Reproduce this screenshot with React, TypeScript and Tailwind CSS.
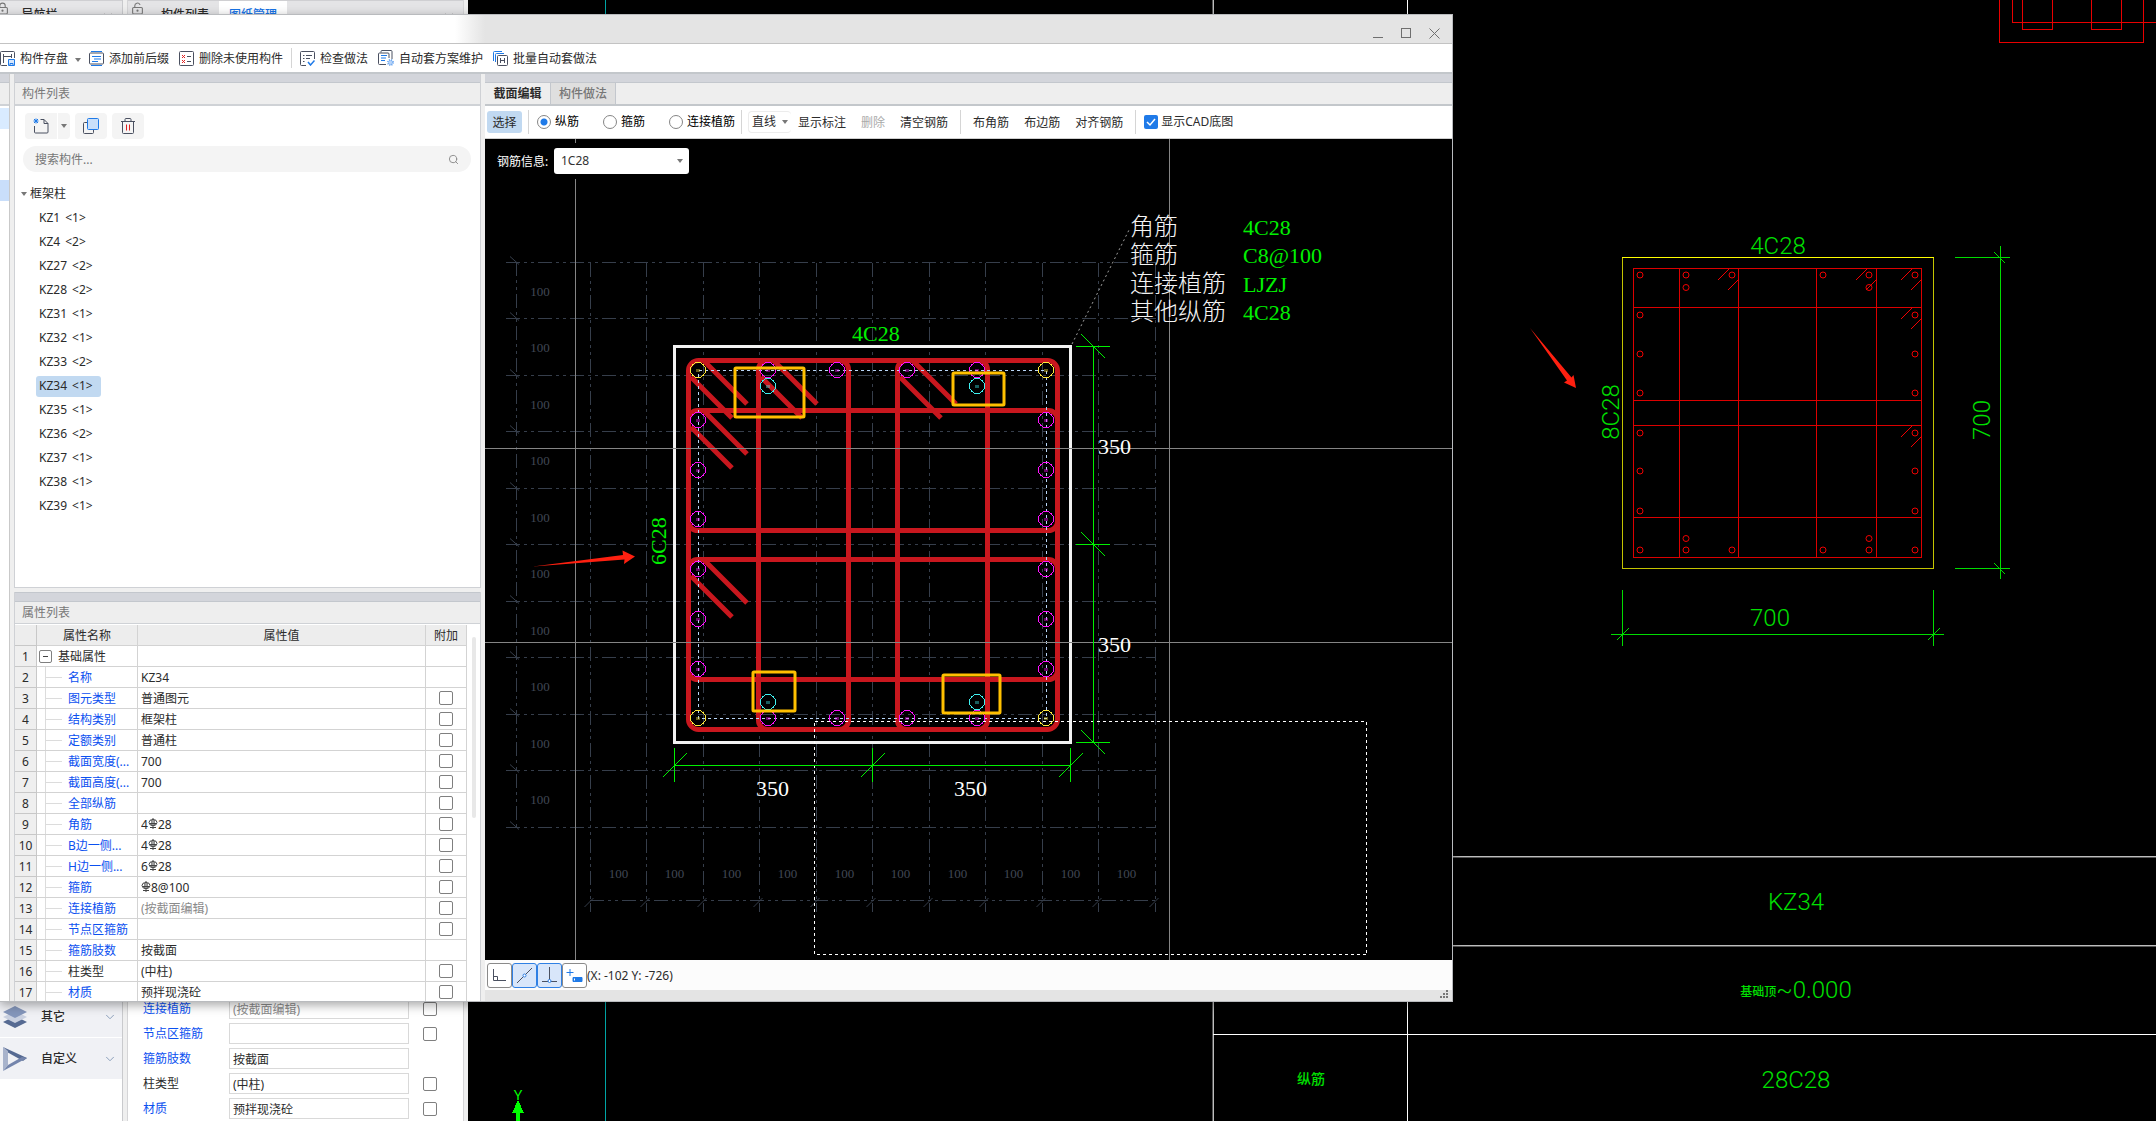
import React from 'react';
import { ChevronDown, LockKeyhole, LockKeyholeOpen, Search, X } from 'lucide-react';

type Prop = {
  name: string;
  value?: string;
  muted?: boolean;
  plain?: boolean;
  check?: boolean;
};

const components = [
  ['KZ1', 1], ['KZ4', 2], ['KZ27', 2], ['KZ28', 2], ['KZ31', 1], ['KZ32', 1], ['KZ33', 2],
  ['KZ34', 1], ['KZ35', 1], ['KZ36', 2], ['KZ37', 1], ['KZ38', 1], ['KZ39', 1],
];

// "|" in a value marks where the rebar grade symbol goes
const props: Prop[] = [
  { name: '名称', value: 'KZ34' },
  { name: '图元类型', value: '普通图元', check: true },
  { name: '结构类别', value: '框架柱', check: true },
  { name: '定额类别', value: '普通柱', check: true },
  { name: '截面宽度(...', value: '700', check: true },
  { name: '截面高度(...', value: '700', check: true },
  { name: '全部纵筋', value: '', check: true },
  { name: '角筋', value: '4|28', check: true },
  { name: 'B边一侧...', value: '4|28', check: true },
  { name: 'H边一侧...', value: '6|28', check: true },
  { name: '箍筋', value: '|8@100', check: true },
  { name: '连接植筋', value: '(按截面编辑)', muted: true, check: true },
  { name: '节点区箍筋', value: '', check: true },
  { name: '箍筋肢数', value: '按截面' },
  { name: '柱类型', value: '(中柱)', plain: true, check: true },
  { name: '材质', value: '预拌现浇砼', check: true },
];

const backProps = props.slice(11);

const range = (n: number) => Array.from({ length: n }, (_, i) => i);

/* ---------- small parts ---------- */

const Caret = () => (
  <svg width="6" height="4" viewBox="0 0 6 4" className="shrink-0">
    <path d="M0 0h6L3 4z" fill="#777" />
  </svg>
);

const Tick = ({ label }: { label: string }) => (
  <input type="checkbox" aria-label={label} className="block size-[14px] shrink-0 appearance-none rounded-[2px] border border-[#7f7f7f] bg-white" />
);

const Rebar = () => (
  <svg width="10" height="12" viewBox="0 0 10 12" className="mb-1 inline-block" fill="none" stroke="#444">
    <path d="M5 0v11M2 9.500h6M2 5.500h6" />
    <path d="M3.500 2v6M6.500 2v6" strokeWidth=".6" />
    <ellipse cx="5" cy="4.500" rx="4" ry="3" />
  </svg>
);

const Value = ({ text }: { text: string }) => {
  const parts = text.split('|');
  return parts.length === 1 ? <>{text}</> : <>{parts[0]}<Rebar />{parts[1]}</>;
};

const Divider = () => <span className="h-6 w-px shrink-0 bg-[#d5d5d5]" />;

/* ---------- toolbar icons ---------- */

const IconSave = () => (
  <svg width="15" height="15" viewBox="0 0 15 15" fill="none" stroke="#4a5060">
    <path d="M7 14.5H1.500a1 1 0 0 1-1-1v-12a1 1 0 0 1 1-1h12a1 1 0 0 1 1 1V7M3.500 3v9M3.500 5.500h8M11.500 3v4" />
    <path d="M8.500 8.500h6v6h-6zM10 12.500h3v2h-3z" stroke="#1f7ae8" fill="#d6e6fb" />
  </svg>
);
const IconAffix = () => (
  <svg width="15" height="15" viewBox="0 0 15 15" fill="none" stroke="#4a5060">
    <path d="M.5 3v9a1 1 0 0 0 1 1h12a1 1 0 0 0 1-1V3a1 1 0 0 0-1-1h-12a1 1 0 0 0-1 1z" />
    <path d="M2 .5h11M2 14.500h11M3 5.500h9M5 8h7M3 10.500h6" stroke="#1f7ae8" />
  </svg>
);
const IconUnused = () => (
  <svg width="15" height="15" viewBox="0 0 15 15" fill="none" stroke="#4a5060">
    <rect x=".5" y=".5" width="14" height="14" rx="1" />
    <path d="M8 5.500h4M8 10.500h4" />
    <path d="M3 4l3 3M6 4l-3 3M3 9l3 3M6 9l-3 3" stroke="#e02020" />
  </svg>
);
const IconCheckRule = () => (
  <svg width="15" height="15" viewBox="0 0 15 15" fill="none" stroke="#4a5060">
    <path d="M6 14.500H1.500a1 1 0 0 1-1-1v-12a1 1 0 0 1 1-1h12a1 1 0 0 1 1 1V8M3 4.500h1.500M6 4.500h6M3 7.500h1.500M6 7.500h4M3 10.500h1.500" />
    <path d="M8 11l2.500 3L14.500 9.500" stroke="#1f7ae8" strokeWidth="1.500" />
  </svg>
);
const IconScheme = () => (
  <svg width="16" height="16" viewBox="0 0 16 16" fill="none" stroke="#4a5060">
    <path d="M3 2.500V1.500a1 1 0 0 1 1-1h9a1 1 0 0 1 1 1V9M8 14.500H1.500a1 1 0 0 1-1-1V4a1 1 0 0 1 1-1H10a1 1 0 0 1 1 1v4" />
    <path d="M3 5.500h6M3 8h5M3 10.500h4" stroke="#1f7ae8" />
    <circle cx="12.500" cy="12.500" r="2.500" stroke="#6aa6f0" strokeWidth="2" strokeDasharray="1 1" fill="#b8d4f8" />
  </svg>
);
const IconBatch = () => (
  <svg width="15" height="15" viewBox="0 0 15 15" fill="none" stroke="#4a5060">
    <path d="M.5 10V1.500a1 1 0 0 1 1-1H9M2.500 11V3.500a1 1 0 0 1 1-1H11" stroke="#1f7ae8" />
    <rect x="4.500" y="4.500" width="10" height="10" rx="1" fill="#fff" />
    <path d="M7.500 7v5M11.500 7v5M7.500 9.500h4" />
  </svg>
);

const ToolButton = ({ icon, children }: { icon: React.ReactNode; children: React.ReactNode }) => (
  <button type="button" className="flex shrink-0 items-center gap-[5px] whitespace-nowrap">
    {icon}
    <span className="pt-[2px]">{children}</span>
  </button>
);

/* ---------- CAD plan behind the dialog ---------- */

const PlanHook = ({ x, y }: { x: number; y: number }) => (
  <path d={`M${x - 10} ${y}l-11 11M${x} ${y + 10}l-11 11`} />
);

const PlanCanvas = () => {
  const sideY = [315, 354, 393, 433, 471, 511];
  const topX = [1640, 1686, 1732, 1823, 1869, 1915];
  return (
    <svg className="h-full w-full" fill="none" shapeRendering="crispEdges">
      {/* origin of the drawing is the window corner */}
      <g transform="translate(-468 0)">
        <path d="M605.500 0V1121" stroke="#00a5a5" />
        <path d="M1213.500 0V1121M1213 856.500H2156M1213 945.500H2156" stroke="#bdbdbd" />
        <path d="M1212.500 0V1121M1213 857.500H2156M1213 946.500H2156" stroke="#555" />
        <path d="M1407.500 0V1121M1213 1034.500H2156" stroke="#fff" />

        {/* cut-off section, top right */}
        <path d="M1999.500 0V42.500H2143.500V0M2012.500 0V22.500H2156M2022.500 0V29.500H2052.500V0M2091.500 0V29.500H2121.500V0" stroke="#e80000" />

        <path d="M1622.500 257.500V568.500H1933.500V257.500" stroke="#c4c400" />
        <path d="M1622 257.500H1934" stroke="#ffff00" />

        <g stroke="#dc0000">
          <rect x="1633.500" y="268.500" width="288" height="289" />
          <path d="M1679.500 268V557M1738.500 268V557M1816.500 268V557M1876.500 268V557" />
          <path d="M1633 307.500H1922M1633 400.500H1922M1633 425.500H1922M1633 517.500H1922" />
        </g>
        <g stroke="#f00000" shapeRendering="auto">
          <PlanHook x={1739} y={269} />
          <PlanHook x={1877} y={269} />
          <PlanHook x={1922} y={269} />
          <PlanHook x={1922} y={308} />
          <PlanHook x={1922} y={426} />
          {topX.map((x) => <circle key={x} cx={x} cy="275" r="3" />)}
          {topX.map((x) => <circle key={x} cx={x} cy="550" r="3" />)}
          {sideY.map((y) => <circle key={y} cx="1640" cy={y} r="3" />)}
          {sideY.map((y) => <circle key={y} cx="1915" cy={y} r="3" />)}
          {[1686, 1869].map((x) => <path key={x} d={`M${x - 3} 287.500a3 3 0 1 0 6 0a3 3 0 1 0-6 0M${x - 3} 538.500a3 3 0 1 0 6 0a3 3 0 1 0-6 0`} />)}
        </g>

        <g stroke="#00dc00">
          <path d="M2000.500 246V579M1955 257.500H2010M1955 568.500H2010M1611 634.500H1944M1622.500 590V646M1933.500 590V646" />
          <path d="M1994 252l11 11M1994 563l11 11M1617 640l12-12M1928 640l12-12" />
        </g>

        <g fill="#00e000" fontFamily="'Roboto', 'Noto Sans CJK SC', sans-serif" fontSize="24" fontWeight="300" textAnchor="middle" shapeRendering="auto">
          <text x="1778" y="254">4C28</text>
          <text x="1770" y="626">700</text>
          <text transform="translate(1619 412) rotate(-90)">8C28</text>
          <text transform="translate(1990 420) rotate(-90)">700</text>
          <text x="1796" y="910">KZ34</text>
          <text x="1796" y="998"><tspan fontSize="12" fontWeight="500" dy="-2">基础顶</tspan><tspan dy="2">~0.000</tspan></text>
          <text x="1796" y="1088">28C28</text>
          <text x="1311" y="1084" fontSize="14" fontWeight="500">纵筋</text>
        </g>

        <path d="M1530 328L1571.500 377.500L1573.500 375L1576 388L1564 382.500L1567 380.500z" fill="#ff2010" shapeRendering="auto" />

        <text x="518" y="1100" textAnchor="middle" fontSize="15" fontFamily="'Noto Sans', sans-serif" fill="#00ff00">Y</text>
        <path d="M518 1100l6 13h-4v8h-4v-8h-4z" fill="#00ff00" />
      </g>
    </svg>
  );
};

/* ---------- section editor canvas ---------- */

const gx = (i: number) => Math.floor(590 + i * 56.5) + 0.5;
const gy = (i: number) => Math.floor(262 + i * 56.5) + 0.5;

const Bars = ({ points, color }: { points: number[][]; color: string }) => (
  <g stroke={color} shapeRendering="crispEdges">
    {points.map(([x, y]) => (
      <g key={`${x}-${y}`}>
        <circle cx={x} cy={y} r="7.500" />
        <path d={`M${x - 2} ${y}h4`} strokeWidth="3" opacity=".4" />
      </g>
    ))}
  </g>
);

const Hooks = ({ x, y }: { x: number; y: number }) => (
  <path d={`M${x + 15} ${y + 1}L${x + 58} ${y + 44}M${x + 2} ${y + 17}L${x + 43} ${y + 58}`} />
);

const SectionCanvas = () => {
  const sideY = [420, 470, 519, 569, 619, 669];
  const topX = [768, 837, 907, 977];
  const magenta = [
    ...sideY.map((y) => [698, y]),
    ...sideY.map((y) => [1046, y]),
    ...topX.map((x) => [x, 370]),
    ...topX.map((x) => [x, 718]),
  ];
  return (
    <svg className="h-full w-full" fill="none">
      <g transform="translate(-485 -139)">
        {/* 100mm snap grid with its two rulers */}
        <g stroke="#363e4b" strokeDasharray="14 4 3 4 3 4" shapeRendering="crispEdges">
          <path d={range(11).map((i) => `M${gx(i)} 263V912M506 ${gy(i)}H1156`).join('')} />
          <path d="M516.500 262V830M590 900.500H1156" />
        </g>
        <path
          stroke="#363e4b"
          d={range(11).map((i) => `M510 ${gy(i) - 6}l9 8M${gx(i) - 6} 907l9-9`).join('')}
        />
        <g fill="#404855" fontFamily="'Liberation Serif', serif" fontSize="13" textAnchor="middle">
          {range(10).map((i) => <text key={i} x="540" y={gy(i) + 33}>100</text>)}
          {range(10).map((i) => <text key={i} x={gx(i) + 28} y="878">100</text>)}
        </g>

        <rect x="674.500" y="346.500" width="396" height="396" stroke="#f2f2f2" strokeWidth="3" />

        {/* stirrups */}
        <g stroke="#c8171e" strokeWidth="5">
          <rect x="688.500" y="360.500" width="369" height="369" rx="10" />
          <rect x="758.500" y="360.500" width="90" height="369" rx="9" />
          <rect x="897.500" y="360.500" width="90" height="369" rx="9" />
          <rect x="688.500" y="410.500" width="369" height="120" rx="9" />
          <rect x="688.500" y="559.500" width="369" height="120" rx="9" />
          <Hooks x={689} y={360} />
          <Hooks x={759} y={360} />
          <Hooks x={898} y={360} />
          <Hooks x={689} y={410} />
          <Hooks x={689} y={559} />
        </g>

        <rect x="698.500" y="370.500" width="348" height="348" stroke="#b9d6f8" strokeDasharray="3 3" shapeRendering="crispEdges" />
        <Bars points={magenta} color="#ff10ff" />
        <Bars points={[[698, 370], [1046, 370], [698, 718], [1046, 718]]} color="#ffe83a" />
        <Bars points={[[768, 386], [977, 386], [768, 702], [977, 702]]} color="#3ff0f0" />

        {/* cross lines */}
        <path d="M575.500 139V960M1169.500 139V960M485 448.500H1452M485 642.500H1452" stroke="#858585" shapeRendering="crispEdges" />
        <rect x="814.500" y="721.500" width="552" height="233" stroke="#fff" strokeDasharray="3 3" shapeRendering="crispEdges" />

        {/* dimensions */}
        <g stroke="#00f000">
          <path d="M1093.500 346V743M1076 346.500h34M1076 544.500h34M1076 742.500h34M674 765.500H1071M674.500 748v34M872.500 748v34M1070.500 748v34" shapeRendering="crispEdges" />
          <path d="M1081 334l24 24M1081 532l24 24M1081 730l24 24M663 777l24-24M861 777l24-24M1059 777l24-24" />
        </g>
        <path d="M1072 344L1130 228" stroke="#a0a0a0" strokeDasharray="2 3" />

        <g stroke="#ffc000" strokeWidth="3">
          <rect x="735" y="368" width="69" height="49" rx="1" />
          <rect x="953" y="373" width="51" height="32" rx="1" />
          <rect x="753" y="672" width="42" height="39" rx="1" />
          <rect x="943" y="675" width="57" height="38" rx="1" />
        </g>

        <g fontFamily="'Liberation Serif', 'Noto Sans CJK SC', serif" fontSize="22" fill="#00f000">
          <text x="852" y="341">4C28</text>
          <text transform="translate(666 565) rotate(-90)">6C28</text>
          <text x="1243" y="235">4C28</text>
          <text x="1243" y="263">C8@100</text>
          <text x="1243" y="292">LJZJ</text>
          <text x="1243" y="320">4C28</text>
          <g fill="#fff">
            <text x="1098" y="454">350</text>
            <text x="1098" y="652">350</text>
            <text x="756" y="796">350</text>
            <text x="954" y="796">350</text>
          </g>
          <g fill="#f4f4f4" fontSize="24" fontWeight="300">
            <text x="1130" y="235">角筋</text>
            <text x="1130" y="263">箍筋</text>
            <text x="1130" y="292">连接植筋</text>
            <text x="1130" y="320">其他纵筋</text>
          </g>
        </g>

        <path d="M533 566.500L623 555L622.500 550.500L635 556.500L624 564L624.500 559.500z" fill="#ff2010" />
      </g>
    </svg>
  );
};

/* ---------- main window ---------- */

const MainWindow = () => (
  <div className="flex h-full bg-[#efefef]">
    <div className="flex w-[123px] shrink-0 flex-col border-r border-[#c9cacd] bg-white">
      <div className="flex h-6 items-center justify-between border-t border-[#cfcfd2] bg-[#e6e6e8] pr-2">
        <LockKeyhole size={13} className="mb-2 -ml-1 text-[#777]" />
        <span className="mt-1 mr-8 font-medium">导航栏</span>
        <X size={12} className="mt-2 text-[#888]" />
      </div>
      <div className="mt-auto mb-[42px] font-medium">
        <button type="button" className="flex h-[41px] w-full items-center bg-[#f0f1f5] pr-[5px] pl-[3px]">
          <svg width="24" height="24" viewBox="0 0 24 24">
            <path d="M0 17l12-6 12 6-12 6z" fill="#566a92" />
            <path d="M0 12l12-6 12 6-12 6z" fill="#c9d0e0" />
            <path d="M0 7l12-6 12 6-12 6z" fill="#8496bb" />
          </svg>
          <span className="ml-[14px]">其它</span>
          <ChevronDown size={14} strokeWidth={1.5} className="ml-auto text-[#7f95b2]" />
        </button>
        <button type="button" className="mt-px flex h-[41px] w-full items-center bg-[#f0f1f5] pr-[5px] pl-[3px]">
          <svg width="24" height="24" viewBox="0 0 24 24">
            <path d="M0 0l24 11-4 3L4 5z" fill="#566a92" />
            <path d="M0 0l5 4v14l-5 6z" fill="#a8b3cc" />
            <path d="M0 24l24-13-5-1L5 18z" fill="#7485ac" />
          </svg>
          <span className="ml-[14px]">自定义</span>
          <ChevronDown size={14} strokeWidth={1.5} className="ml-auto text-[#7f95b2]" />
        </button>
      </div>
    </div>

    <div className="ml-1 flex w-[337px] shrink-0 flex-col border-x border-[#d5d5d7] bg-white">
      <div className="flex h-6 items-center border-t border-[#cfcfd2] bg-[#e4e4e6]">
        <LockKeyholeOpen size={13} className="mb-2 ml-[3px] text-[#777]" />
        <span className="mt-1 ml-[17px] font-medium">构件列表</span>
        <span className="ml-[10px] flex h-full w-[68px] items-center justify-center bg-white pt-1 font-medium text-[#1773e6]">图纸管理</span>
        <X size={12} className="mt-2 mr-2 ml-auto text-[#888]" />
      </div>
      <div className="mt-auto">
        {backProps.map((p) => (
          <div key={p.name} className="flex h-[25px] items-center pl-[15px]">
            <label htmlFor={`back-${p.name}`} className={p.plain ? 'w-[86px]' : 'w-[86px] text-[#0b50f0]'}>{p.name}</label>
            <input
              id={`back-${p.name}`}
              defaultValue={p.value}
              className={`h-[21px] w-[180px] border border-[#d9d9d9] bg-white pl-[3px] ${p.muted ? 'text-[#8a8a8a]' : ''}`}
            />
            {p.check && <span className="ml-[14px]"><Tick label={p.name} /></span>}
          </div>
        ))}
      </div>
    </div>

    <div className="ml-1 min-w-0 flex-1 bg-black">
      <PlanCanvas />
    </div>
  </div>
);

/* ---------- dialog ---------- */

const ComponentList = () => (
  <section className="flex min-h-0 flex-1 flex-col border-x border-b border-[#cfd1d5] bg-white">
    <div className="h-[9px] shrink-0 border-b border-[#c3c7cd] bg-[#d3d5db]" />
    <h2 className="flex h-[23px] shrink-0 items-center border-b-2 border-[#cfd2d6] bg-[#eee] pl-[7px] text-[#777]">构件列表</h2>
    <div className="flex pt-[7px] pl-[10px]">
      <button type="button" aria-label="新建" className="flex h-[26px] w-8 items-center justify-center rounded-l bg-[#f4f4f4]">
        <svg width="16" height="16" viewBox="0 0 16 16" fill="none" stroke="#4a5060">
          <path d="M1.500 8v6a1 1 0 0 0 1 1h11.500a1 1 0 0 0 1-1V5.500L11 1.500H7.500M11 1.500v4h4" />
          <path d="M1 1l4 4M5 1L1 5M3 .5v5M.5 3h5" stroke="#1f7ae8" />
        </svg>
      </button>
      <button type="button" aria-label="新建选项" className="ml-px flex h-[26px] w-3 items-center justify-center rounded-r bg-[#f4f4f4]"><Caret /></button>
      <button type="button" aria-label="复制" className="ml-[5px] flex h-[26px] w-8 items-center justify-center rounded bg-[#f4f4f4]">
        <svg width="16" height="16" viewBox="0 0 16 16" fill="none">
          <rect x=".5" y="4.500" width="10" height="11" rx="1" stroke="#4a5060" />
          <rect x="4.500" y=".5" width="11" height="11" rx="1" stroke="#1f7ae8" fill="#c9dffa" />
        </svg>
      </button>
      <button type="button" aria-label="删除构件" className="ml-[5px] flex h-[26px] w-8 items-center justify-center rounded bg-[#f4f4f4]">
        <svg width="14" height="16" viewBox="0 0 14 16" fill="none" stroke="#4a5060">
          <path d="M0 3.500h14M4 3.500v-2a1 1 0 0 1 1-1h4a1 1 0 0 1 1 1v2M1.500 3.500v11a1 1 0 0 0 1 1h9a1 1 0 0 0 1-1v-11" />
          <path d="M5.500 6.500v6M8.500 6.500v6" stroke="#e02020" />
        </svg>
      </button>
    </div>
    <div className="mt-[7px] mr-[9px] ml-2 flex h-[26px] items-center rounded-full bg-[#f4f4f4] px-3">
      <input aria-label="搜索构件" placeholder="搜索构件..." className="min-w-0 flex-1 bg-transparent pt-px outline-none placeholder:text-[#777]" />
      <Search size={11} className="text-[#888]" />
    </div>
    <div className="mt-[10px]">
      <div className="flex h-6 items-center gap-[3px] pl-[6px]"><Caret />框架柱</div>
      <ul>
        {components.map(([name, count]) => (
          <li key={name} className="flex h-6 items-center pl-[21px]">
            <span className={`flex h-[21px] w-[65px] items-center gap-[5px] rounded-[3px] pl-[3px] ${name === 'KZ34' ? 'bg-[#c1d9f1]' : ''}`}>
              <span>{name}</span>
              <span>&lt;{count}&gt;</span>
            </span>
          </li>
        ))}
      </ul>
    </div>
  </section>
);

const PropertyList = () => (
  <section className="mt-1 flex h-[409px] shrink-0 flex-col overflow-hidden border-x border-[#cfd1d5] bg-white">
    <div className="h-[10px] shrink-0 border-y border-[#c3c7cd] bg-[#d3d5db]" />
    <h2 className="mb-px flex h-[22px] shrink-0 items-center border-b border-[#cfd2d6] bg-[#eee] pl-[7px] text-[#777]">属性列表</h2>
    <div className="flex min-h-0 flex-1">
      <table className="h-fit flex-1 table-fixed border-separate border-spacing-0">
        <thead>
          <tr className="h-[21px] bg-[#ededed]">
            <th aria-label="序号" className="w-[22px] border-r border-b border-[#c8c8c8]" />
            <th className="w-[101px] border-r border-b border-[#d3d3d3] px-0 pt-[2px] pb-0 font-normal">属性名称</th>
            <th className="border-r border-b border-[#d3d3d3] px-0 pt-[2px] pb-0 font-normal">属性值</th>
            <th className="w-[41px] border-r border-b border-[#d3d3d3] px-0 pt-[2px] pb-0 font-normal">附加</th>
          </tr>
        </thead>
        <tbody>
          <tr className="h-[21px]">
            <td className="border-r border-b border-[#c8c8c8] bg-[#efefef] px-0 pt-[2px] pb-0 text-center">1</td>
            <td className="border-r border-b border-[#d3d3d3] p-0">
              <div className="flex h-5 items-center gap-[6px] pl-[2px]">
                <button type="button" aria-label="折叠" className="flex size-[13px] items-center justify-center rounded-[2px] border border-[#7f7f7f]">
                  <span className="h-px w-[5px] bg-[#444]" />
                </button>
                <span className="pt-[2px]">基础属性</span>
              </div>
            </td>
            <td className="border-r border-b border-[#d3d3d3] p-0" />
            <td className="border-r border-b border-[#d3d3d3] p-0" />
          </tr>
          {props.map((p, i) => (
            <tr key={p.name} className="h-[21px]">
              <td className="border-r border-b border-[#c8c8c8] bg-[#efefef] px-0 pt-[2px] pb-0 text-center">{i + 2}</td>
              <td className="border-r border-b border-[#d3d3d3] p-0">
                <div className="ml-2 flex h-5 items-center overflow-hidden border-l border-[#dcdcdc] whitespace-nowrap">
                  <span className="mr-[6px] h-px w-4 shrink-0 bg-[#dcdcdc]" />
                  <span className={p.plain ? 'pt-[2px]' : 'pt-[2px] text-[#0b50f0]'}>{p.name}</span>
                </div>
              </td>
              <td className={`border-r border-b border-[#d3d3d3] py-0 pr-0 pl-[3px] ${p.muted ? 'text-[#8a8a8a]' : ''}`}>
                <div className="h-5 overflow-hidden leading-[22px]"><Value text={p.value ?? ''} /></div>
              </td>
              <td className="border-r border-b border-[#d3d3d3] py-0 pr-0 pl-[13px]">{p.check && <Tick label={p.name} />}</td>
            </tr>
          ))}
        </tbody>
      </table>
      <div className="w-[13px] shrink-0 pt-3 pl-[5px]"><div className="h-[181px] w-1 rounded-full bg-[#e8e8e8]" /></div>
    </div>
  </section>
);

const SectionToolbar = () => (
  <div className="flex h-[33px] shrink-0 items-center border-b border-[#cfcfcf] bg-white pl-[2px] whitespace-nowrap">
    <button type="button" className="mr-[6px] h-[22px] w-[35px] rounded-[3px] bg-[#c1d9f1] pt-px">选择</button>
    <Divider />
    <div className="mr-[6px] ml-2 flex gap-6 text-black">
      {['纵筋', '箍筋', '连接植筋'].map((t, i) => (
        <label key={t} className="flex items-center gap-1">
          <input
            type="radio"
            name="bar"
            defaultChecked={i === 0}
            className="size-[14px] appearance-none rounded-full border border-[#858585] bg-white checked:bg-[radial-gradient(circle,#1f7ae8_3px,#fff_4px)]"
          />
          {t}
        </label>
      ))}
    </div>
    <Divider />
    <button type="button" className="ml-[6px] flex h-[22px] items-center gap-[6px] rounded border-y border-l border-[#ececec] px-[3px]">直线<Caret /></button>
    <div className="mr-3 ml-[7px] flex gap-[15px] pt-[2px]">
      <button type="button">显示标注</button>
      <button type="button" disabled className="text-[#aaa]">删除</button>
      <button type="button">清空钢筋</button>
    </div>
    <Divider />
    <div className="mx-3 flex gap-[15px] pt-[2px]">
      <button type="button">布角筋</button>
      <button type="button">布边筋</button>
      <button type="button">对齐钢筋</button>
    </div>
    <Divider />
    <label className="ml-2 flex items-center gap-[3px]">
      <span className="grid size-[14px]">
        <input type="checkbox" defaultChecked className="col-start-1 row-start-1 size-[14px] appearance-none rounded-[2px] bg-[#1f7ae8]" />
        <svg viewBox="0 0 14 14" className="pointer-events-none col-start-1 row-start-1 size-[14px]" fill="none" stroke="#fff" strokeWidth="1.500">
          <path d="M3 7l3 3 5-6" />
        </svg>
      </span>
      显示CAD底图
    </label>
  </div>
);

const StatusBar = () => (
  <div className="flex h-[30px] shrink-0 items-center bg-[#fcfcfc] pl-[2px]">
    <button type="button" aria-label="正交" className="flex size-[25px] items-center justify-center rounded-[3px] border border-[#8a8a8a] bg-white">
      <svg width="15" height="15" viewBox="0 0 15 15" fill="none" stroke="#4a5060"><path d="M1.500 1v11.500H14M1.500 8.500h4v4" /></svg>
    </button>
    <button type="button" aria-label="中点" className="flex size-[25px] items-center justify-center rounded-[3px] border border-[#2f80e4] bg-[#d8e6fa]">
      <svg width="17" height="17" viewBox="0 0 17 17" fill="none" stroke="#4a5060"><path d="M1 16L16 1" /><circle cx="8.500" cy="8.500" r="1.500" fill="#fff" stroke="#2f80e4" /></svg>
    </button>
    <button type="button" aria-label="垂点" className="flex size-[25px] items-center justify-center rounded-[3px] border border-[#2f80e4] bg-[#d8e6fa]">
      <svg width="15" height="16" viewBox="0 0 15 16" fill="none" stroke="#4a5060"><path d="M7.500 0v14M0 14.500h15" /><circle cx="7.500" cy="14" r="1.500" fill="#fff" stroke="#2f80e4" /></svg>
    </button>
    <button type="button" aria-label="动态输入" className="flex size-[25px] items-center justify-center rounded-[3px] border border-[#8a8a8a] bg-white">
      <svg width="17" height="15" viewBox="0 0 17 15" fill="none" stroke="#1f7ae8"><path d="M4 1v7M.5 4.500h7" /><path d="M7 9.500h9v4H7z" fill="#1f7ae8" /><path d="M8.500 10.500v2" stroke="#fff" /></svg>
    </button>
    <span className="pt-px">(X: -102 Y: -726)</span>
  </div>
);

const Dialog = () => (
  <div className="absolute top-[14px] right-[703px] bottom-[119px] left-0 flex flex-col border-y border-r border-[#b9bbbe] bg-[#efefef] shadow-[0_3px_10px_rgba(0,0,0,0.35)]">
    <div className="flex h-[29px] shrink-0 items-center justify-end gap-[18px] border-b border-[#c3c3c3] bg-[linear-gradient(to_right,#fff_455px,#e4e4e4_485px)] pt-2 pr-3 text-[#6f6f6f]">
      <button type="button" aria-label="最小化" className="flex size-[10px] items-end"><span className="h-px w-full bg-[#6f6f6f]" /></button>
      <button type="button" aria-label="最大化" className="size-[10px] border border-[#6f6f6f]" />
      <button type="button" aria-label="关闭" className="size-[11px]">
        <svg width="11" height="11" viewBox="0 0 11 11" stroke="#6f6f6f"><path d="M.5.5l10 10M10.500.5l-10 10" /></svg>
      </button>
    </div>

    <div className="flex h-[30px] shrink-0 items-center gap-[10px] border-b-2 border-[#c3c7cb] bg-white">
      <ToolButton icon={<IconSave />}>构件存盘</ToolButton>
      <span className="-mx-[3px] mt-1 w-[7px]"><Caret /></span>
      <ToolButton icon={<IconAffix />}>添加前后缀</ToolButton>
      <ToolButton icon={<IconUnused />}>删除未使用构件</ToolButton>
      <span className="-mx-[2px] h-5 w-px bg-[#d5d5d5]" />
      <ToolButton icon={<IconCheckRule />}>检查做法</ToolButton>
      <ToolButton icon={<IconScheme />}>自动套方案维护</ToolButton>
      <ToolButton icon={<IconBatch />}>批量自动套做法</ToolButton>
    </div>

    <div className="flex min-h-0 flex-1">
      {/* sliver of the navigation tree that slid under the window edge */}
      <div className="w-[10px] shrink-0 border-r border-[#c9c9c9] bg-white">
        <div className="h-[9px] border-b border-[#c3c7cd] bg-[#d3d5db]" />
        <div className="h-[23px] border-b-2 border-[#cfd2d6] bg-[#eee]" />
        <div className="mt-[2px] h-[21px] bg-[#d9ebff]" />
        <div className="mt-[51px] h-[21px] bg-[#c9defa]" />
      </div>

      <div className="ml-1 flex w-[467px] shrink-0 flex-col">
        <ComponentList />
        <PropertyList />
      </div>

      <div className="ml-1 flex min-w-0 flex-1 flex-col">
        <div className="h-[9px] shrink-0 border-b border-[#c3c7cd] bg-[#d3d5db]" />
        <div className="flex h-[23px] shrink-0 border-b-2 border-[#c3c7cb] bg-[#eee]">
          <button type="button" className="w-[66px] border-r border-[#c3c7cd] font-bold">截面编辑</button>
          <button type="button" className="w-[65px] border-r border-[#c3c7cd] bg-[#dfdfdf] font-medium text-[#777]">构件做法</button>
        </div>
        <SectionToolbar />
        <div className="relative min-h-0 flex-1 overflow-hidden bg-black">
          <SectionCanvas />
          <div className="absolute top-1 left-0 flex h-9 items-center bg-black px-3 text-white">
            <label htmlFor="rebar" className="w-[57px] pt-[2px]">钢筋信息:</label>
            <span className="grid items-center">
              <select id="rebar" className="col-start-1 row-start-1 h-[26px] w-[135px] appearance-none rounded-[3px] bg-white pl-[7px] text-[#333]">
                <option>1C28</option>
              </select>
              <span className="pointer-events-none col-start-1 row-start-1 mr-[6px] justify-self-end"><Caret /></span>
            </span>
          </div>
        </div>
        <StatusBar />
        <div className="flex h-[11px] shrink-0 justify-end bg-[#e4e4e4] pr-1">
          <svg width="8" height="8" viewBox="0 0 8 8" fill="#777"><path d="M6 0h2v2H6zM6 3h2v2H6zM6 6h2v2H6zM3 3h2v2H3zM3 6h2v2H3zM0 6h2v2H0z" /></svg>
        </div>
      </div>
    </div>
  </div>
);

export default function App() {
  return (
    <main className="relative h-screen w-full overflow-hidden bg-black font-['Noto_Sans','Noto_Sans_CJK_SC',sans-serif] text-[12px] leading-4 text-[#2b2b2b]">
      <MainWindow />
      <Dialog />
    </main>
  );
}
